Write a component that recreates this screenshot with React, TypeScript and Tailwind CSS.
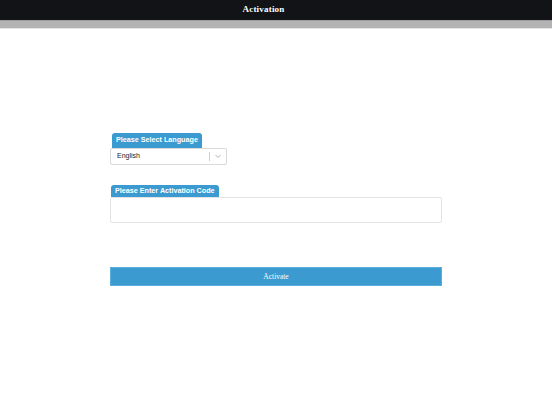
import React, { useState } from "react";

export default function App() {
  const [lang, setLang] = useState<string>("English");
  const [code, setCode] = useState<string>("");

  return (
    <div className="w-[552px] h-[414px] bg-white flex flex-col font-['Liberation_Sans',Arial,sans-serif]">
      {/* top bar */}
      <div className="h-[20px] bg-[#121317] flex items-center justify-center pr-[25px]">
        <span className="text-white text-[9px] font-bold font-['Liberation_Serif',serif] tracking-[0.2px]">
          Activation
        </span>
      </div>
      <div className="h-[8px] bg-[#b3b3b3] border-t border-[#9e9e9e]" />
      <div className="h-px bg-[#e6e6e6]" />

      <div className="ml-[110px] w-[332px] pt-[104px] flex flex-col">
        {/* language */}
        <div className="flex flex-col items-start">
          <div className="ml-[2px] h-[15px] px-[4px] bg-[#3b9ad0] rounded-t-[3px] flex items-center">
            <span className="text-white text-[7.2px] font-bold">Please Select Language</span>
          </div>
          <div className="w-[117px] h-[17px] border border-[#d9d9d9] rounded-[2px] bg-white flex items-center">
            <select
              value={lang}
              onChange={(e) => setLang(e.target.value)}
              className="flex-1 appearance-none bg-transparent text-[7px] text-[#222] pl-[6px] outline-none"
            >
              <option>English</option>
            </select>
            <div className="w-px h-[9px] bg-[#cfcfcf]" />
            <svg width="16" height="15" viewBox="0 0 16 15" className="shrink-0">
              <path d="M5.5 6 L8 8.5 L10.5 6" fill="none" stroke="#a8a8a8" strokeWidth="0.9" />
            </svg>
          </div>
        </div>

        {/* activation code */}
        <div className="mt-[20px] flex flex-col items-start">
          <div className="ml-[1px] h-[12px] px-[4px] bg-[#3b9ad0] rounded-t-[3px] flex items-center">
            <span className="text-white text-[7.2px] font-bold">Please Enter Activation Code</span>
          </div>
          <input
            value={code}
            onChange={(e) => setCode(e.target.value)}
            className="w-[332px] h-[26px] border border-[#e3e3e3] rounded-[2px] bg-white text-[8px] px-[6px] outline-none"
          />
        </div>

        <button className="mt-[44px] w-[332px] h-[19px] bg-[#3b9ad0] border border-[#5aaedc] text-white text-[7.5px] font-['Liberation_Serif',serif]">
          Activate
        </button>
      </div>
    </div>
  );
}
